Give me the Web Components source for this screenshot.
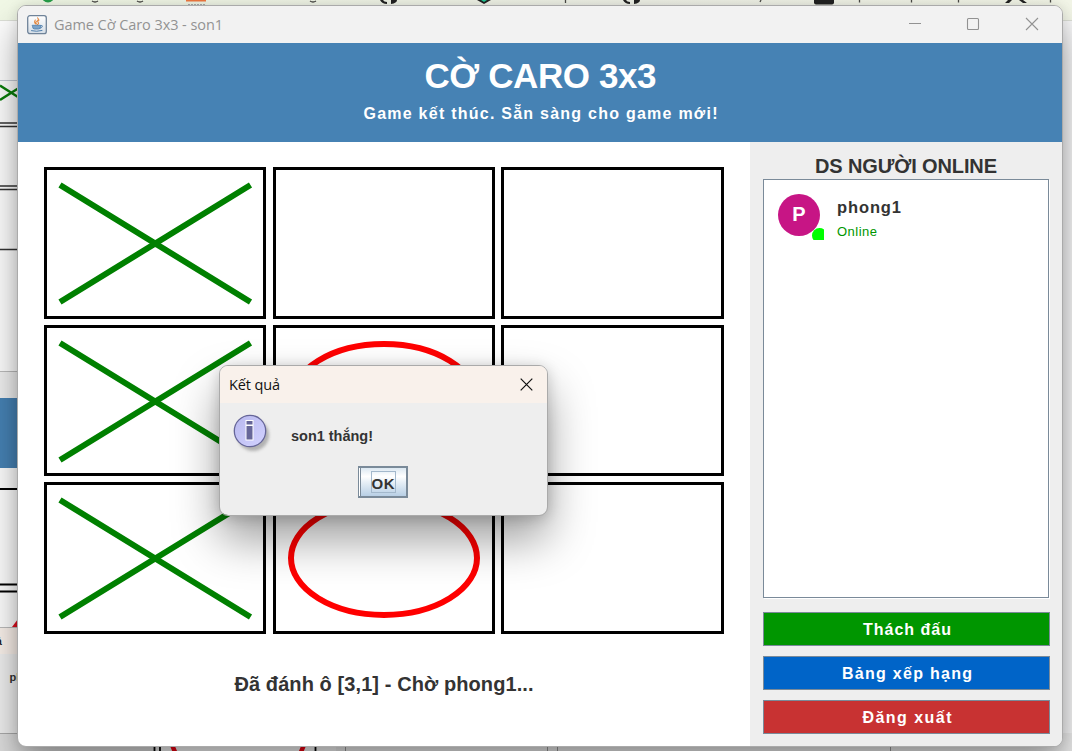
<!DOCTYPE html>
<html lang="vi"><head><meta charset="utf-8"><title>Game Cờ Caro 3x3</title>
<style>
html,body{margin:0;width:1072px;height:751px;overflow:hidden}
body{font-family:"Liberation Sans",Arial,sans-serif;color:#333}
</style></head><body>
<game-desktop></game-desktop>
<script>
const define=(name,html,init)=>customElements.define(name,class extends HTMLElement{
  connectedCallback(){
    if(this.shadowRoot)return;
    this.attachShadow({mode:'open'});
    const t=document.createElement('template');t.innerHTML=html;
    this.shadowRoot.append(t.content.cloneNode(true));
    if(init)init.call(this,this.shadowRoot);
  }
});

/* A single line of text whose tracking is set so that it spans the given width. */
define('fit-text',`<style>:host{display:block;white-space:pre;line-height:1.15}span{display:inline-block}</style><span></span>`,function(r){
  const s=r.querySelector('span'),text=this.getAttribute('text'),w=+this.getAttribute('w');
  s.textContent=text;
  const d=(w-s.getBoundingClientRect().width)/(text.length-1);
  s.style.letterSpacing=d+'px';s.style.marginRight=-d+'px';
});

define('back-windows',`<style>:host{display:block}svg{display:block}text{font-family:"Liberation Sans",Arial,sans-serif;font-weight:700}</style>
<svg width="1072" height="751" viewBox="0 0 1072 751">
<defs><linearGradient id="g"><stop offset="0" stop-color="#f1f8e6"/><stop offset=".6" stop-color="#eef0e6"/><stop offset="1" stop-color="#f3f6e8"/></linearGradient></defs>
<rect width="1072" height="751" fill="#fdfdfd"/>
<rect width="1072" height="20" fill="url(#g)"/><path d="M0 20.500H1072" stroke="#dcdfd6"/>
<rect x="1062" y="21" width="10" height="730" fill="#f8f8f9"/>
<circle cx="48" cy="-4" r="6.500" fill="#27a04a"/>
<path d="M186 0h20v1.500h-20z" fill="#f07840"/><path d="M188 4.500h17" stroke="#aaa" stroke-dasharray="2 1"/>
<g fill="none" stroke="#4a4a46" stroke-width="1.300"><path d="M92 1q3 2 6 0M137 1q3 2 6 0M310 1q3 2 6 0M565.500 0v3M761 0l-1 2M859.500 0v2.500M911.500 0v2.500M958.500 0v2.500M1050.500 0v2.500"/></g>
<g fill="#222"><path d="M380 0q2 4 7 4v-2q-3 0-4-2zM391 0v4q6-1 6-4zM623 0q2 4 7 4v-2q-3 0-4-2zM634 0v4q6-1 6-4z"/><path d="M477 0h14l-7 4z"/><rect x="814" y="-4" width="20" height="8.500" rx="2"/><path d="M1008 0h4l-3 3h-4zM1019 0h4l4 3h-4z"/></g><path d="M481 0h6l-3 2z" fill="#20c997"/>
<path d="M0 80.500h18" stroke="#c5cad4"/>
<path d="M0 85.500l18 11.500M0 100l18-11.500" stroke="#0a7d0a" stroke-width="2.400"/>
<path d="M0 123h18M0 126.500h18M0 186h18M0 189.500h18M0 249.500h18" stroke="#333" stroke-width="1.400"/>
<rect y="371" width="18" height="27" fill="#efefef"/><path d="M0 371.500h18" stroke="#bbb"/>
<rect y="398" width="18" height="70" fill="#4682b4"/>
<path d="M0 489h18M0 584.500h18M0 591.500h18" stroke="#000" stroke-width="2"/>
<path d="M12 627l6-8v8z" fill="#e01020"/>
<rect y="627" width="18" height="27" fill="#f9f0ea"/><path d="M0 627.500h18" stroke="#bbb"/>
<rect y="654" width="18" height="79" fill="#eee"/>
<text x="-4" y="645" font-size="10.500" fill="#222">ả</text><text x="9.500" y="681" font-size="11" fill="#333">ph</text>
<rect y="733" width="1072" height="18" fill="#eee"/><path d="M0 733.500h18" stroke="#aaa"/><rect y="734" width="154" height="17" fill="#ddd"/>
<rect x="160" y="734" width="176" height="17" fill="#f8f8f8"/>
<path d="M154.500 740v11M160 740v11M315.500 740v11" stroke="#000" stroke-width="1.800"/>
<path d="M170 740l5 12M306 740l-5 12" stroke="#f00010" stroke-width="4.500"/>
<path d="M345.500 740v11M547.500 740v11M557.500 740v11M890.500 740v11" stroke="#999"/>
</svg>`);

define('java-icon',`<style>:host,svg{display:block}</style>
<svg width="20" height="20" viewBox="0 0 20 20"><defs><linearGradient id="j" x2="0" y2="1"><stop stop-color="#fff"/><stop offset="1" stop-color="#d4dde6"/></linearGradient></defs>
<rect x=".7" y=".7" width="18.600" height="18" rx="2.200" fill="url(#j)" stroke="#6f8399" stroke-width="1.300"/>
<g fill="none" stroke-linecap="round"><path d="M10.500 2.800q2 1.700-.5 3.300t.2 3.300M12 5q-2 1.200-.6 2.700.6 1-.5 1.700M8.300 5q-1.500 2 .3 3.800" stroke="#e58a42" stroke-width="1.100"/>
<path d="M5.500 10.300h8v1.400q0 2.300-2 2.300h-4q-2 0-2-2.300z" fill="#7ca3c7" stroke="#4f7fad" stroke-width=".8"/><path d="M13.700 10.600q2.300-.4 1.600 1.100-.6 1.200-2 1.500M4.500 15.700q5 1.300 10.500-.2" stroke="#4f7fad"/></g></svg>`);

define('caro-cell',`<style>:host{display:block;border:3px solid #000;box-sizing:border-box;overflow:hidden}svg{display:block}</style>
<svg width="216" height="146" viewBox="0 0 216 146" fill="none" stroke-width="6"></svg>`,function(r){
  const m=this.getAttribute('mark');
  r.querySelector('svg').innerHTML=m==='x'?'<path d="M13 15L203.500 132M203.500 15L13 132" stroke="#008000"/>':m==='o'?'<ellipse cx="108" cy="73" rx="93" ry="57" stroke="#f00"/>':'';
});

define('caro-board',`<style>:host{display:grid;grid-template-columns:223px 222px 223px;grid-template-rows:repeat(3,151.500px);column-gap:6px;row-gap:6px}
caro-cell:nth-of-type(3n+1){margin-right:1px}</style>
${['x','','','x','o','','x','o',''].map(m=>`<caro-cell mark="${m}"></caro-cell>`).join('')}`);

define('caro-button',`<style>:host{display:flex;justify-content:center;align-items:center;height:34px;box-sizing:border-box;border:1px solid #7a8a99;background:var(--c);color:#fff;font-weight:700;font-size:16px;padding:2px 0 0 1px}</style><slot></slot>`);

define('user-row',`<style>:host{display:flex;align-items:flex-start}
.a{position:relative;width:42px;height:42px;border-radius:50%;background:#c71585;color:#fff;font-weight:700;font-size:20px;line-height:41px;text-align:center;margin-right:17px}
.dot{position:absolute;left:34px;top:34px;width:12px;height:12px;overflow:hidden}
.dot::before{content:"";display:block;width:15px;height:15px;border-radius:50%;background:#0f0}
.n{font-weight:700;font-size:16.500px;margin:4px 0 8px}.o{font-size:13px;color:#009600}</style>
<div class="a">P<span class="dot"></span></div><div><fit-text class="n" text="phong1" w="64"></fit-text><fit-text class="o" text="Online" w="40"></fit-text></div>`);

define('result-dialog',`<style>:host{display:flex;flex-direction:column;box-sizing:border-box;width:329px;height:151px;border:1px solid #aaa;border-radius:9px;background:#eee;background-clip:padding-box;box-shadow:0 24px 46px rgba(0,0,0,.38),0 2px 14px rgba(0,0,0,.18);overflow:hidden}
header{height:37px;flex:none;background:#f9f1eb;display:flex;align-items:center;justify-content:space-between;padding:1px 14px 0 9px;font-family:"Open Sans","Noto Sans",sans-serif;font-size:14.500px;color:#111;box-sizing:border-box}
header svg{display:block;margin-bottom:1px}
main{display:flex;flex:none;height:63px;box-sizing:border-box;padding:10px 0 0 11px}main svg{display:block}
.m{font-weight:700;font-size:14.500px;margin:15px 0 0 18px}
.b{align-self:center;margin-left:-2px;width:50px;height:32px;flex:none;box-sizing:border-box;border:2px solid #7a8a99;border-left:1px solid #7a8a99;box-shadow:inset 1px 0 #fff,inset 2px 0 #7a8a99;background:linear-gradient(#dce8f2,#fff 30%,#e8f0f7 50%,#b8cfe5);display:flex;align-items:center;justify-content:center;padding-left:2px}
.f{border:1px solid #a3b8cc;width:25px;height:22px;box-sizing:border-box;display:flex;align-items:center;justify-content:center;font-weight:700;font-size:15px;padding-top:3px}</style>
<header><fit-text text="Kết quả" w="51"></fit-text><svg width="13" height="13" viewBox="0 0 13 13"><path d="M.7.7l11.600 11.600M12.300.7L.7 12.300" stroke="#111" stroke-width="1.200"/></svg></header>
<main><svg width="42" height="42" viewBox="0 0 42 42"><defs><filter id="b"><feGaussianBlur stdDeviation="1.500"/></filter><linearGradient id="i" x2="1" y2="1"><stop stop-color="#b8b8ee"/><stop offset="1" stop-color="#d2d2ff"/></linearGradient></defs>
<circle cx="22" cy="22" r="16" fill="#999" opacity=".7" filter="url(#b)"/><circle cx="19" cy="18" r="15.700" fill="url(#i)" stroke="#666699" stroke-width="1.300"/>
<path d="M14.500 7h8v20.500h-8z" fill="#fff"/><path d="M15.500 8h6v3.500h-6zM15.500 13h6v13.500h-6z" fill="#666699"/></svg><fit-text class="m" text="son1 thắng!" w="82"></fit-text></main>
<div class="b"><div class="f"><fit-text text="OK" w="23"></fit-text></div></div>`);

define('game-window',`<style>:host{display:flex;flex-direction:column;box-sizing:border-box;width:1046px;height:742px;border:1px solid #aaa;border-radius:9px;background:#fff;overflow:hidden;box-shadow:0 22px 36px rgba(0,0,0,.36),0 0 12px rgba(0,0,0,.1)}
.t{height:37px;flex:none;background:#f2f2f2;display:flex;align-items:center;padding:0 23px 0 9px;box-sizing:border-box;font-family:"Open Sans","Noto Sans",sans-serif;font-size:14.500px;color:#929292}
.t fit-text{margin:1px 0 0 7px;flex:1}.t svg{display:block;margin-bottom:1px}
.h{height:99px;flex:none;background:#4682b4;color:#fff;display:flex;flex-direction:column;align-items:center;font-weight:700;box-sizing:border-box;padding:12px 0 0 1px}
.h1{font-size:35px;line-height:41px}.h2{font-size:16px;margin-top:9px}
.c{flex:1;display:flex}.l{width:732px;flex:none;display:flex;flex-direction:column;align-items:center;padding-top:25px;box-sizing:border-box}
caro-board{width:680px}.s{font-weight:700;font-size:20px;margin-top:39.500px}
.r{flex:1;background:#eee;padding:13px 13px 0;display:flex;flex-direction:column}.r .d{font-size:20px;font-weight:700;align-self:center;height:24px;margin-right:1px}
.list{height:419px;width:286px;box-sizing:border-box;border:1px solid #7a8a99;background:#fff;padding:14px;box-shadow:1px 1px #fff;margin-bottom:14px}
.g{display:grid;gap:10px;width:287px}</style>
<div class="t"><java-icon></java-icon><fit-text text="Game Cờ Caro 3x3 - son1" w="169"></fit-text><svg width="130" height="14" viewBox="0 0 130 14" fill="none" stroke="#929292" stroke-width="1.100"><path d="M0 6.500h12M117 1l12 12M129 1l-12 12"/><rect x="58.500" y="1.500" width="11" height="11" rx="1"/></svg></div>
<div class="h"><fit-text class="h1" text="CỜ CARO 3x3" w="232"></fit-text><fit-text class="h2" text="Game kết thúc. Sẵn sàng cho game mới!" w="354"></fit-text></div>
<div class="c"><div class="l"><caro-board></caro-board><fit-text class="s" text="Đã đánh ô [3,1] - Chờ phong1..." w="299"></fit-text></div>
<div class="r"><fit-text class="d" text="DS NGƯỜI ONLINE" w="182"></fit-text><div class="list"><user-row></user-row></div>
<div class="g"><caro-button style="--c:#009600"><fit-text text="Thách đấu" w="88"></fit-text></caro-button><caro-button style="--c:#0064c8"><fit-text text="Bảng xếp hạng" w="130"></fit-text></caro-button><caro-button style="--c:#c83232"><fit-text text="Đăng xuất" w="89"></fit-text></caro-button></div></div></div>`);

define('game-desktop',`<style>:host{display:block;position:relative;width:1072px;height:751px;overflow:hidden}
game-window{position:absolute;left:17px;top:5px}result-dialog{position:absolute;left:219px;top:365px}</style>
<back-windows></back-windows><game-window></game-window><result-dialog></result-dialog>`);
</script></body></html>
